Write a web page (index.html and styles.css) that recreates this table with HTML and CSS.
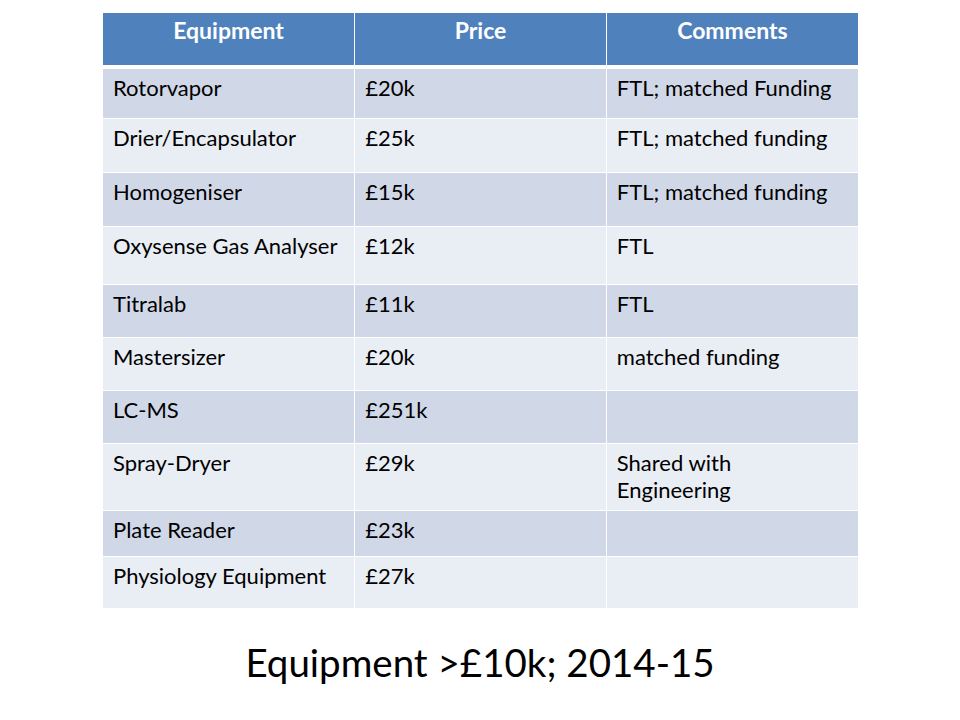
FILE: index.html
```html
<!DOCTYPE html>
<html>
<head>
<meta charset="utf-8">
<link rel="stylesheet" href="styles.css">
</head>
<body>
<div class="slide">
  <table class="equip">
    <thead>
      <tr><th>Equipment</th><th>Price</th><th>Comments</th></tr>
    </thead>
    <tbody>
      <tr><td>Rotorvapor</td><td>£20k</td><td>FTL; matched Funding</td></tr>
      <tr><td>Drier/Encapsulator</td><td>£25k</td><td>FTL; matched funding</td></tr>
      <tr><td>Homogeniser</td><td>£15k</td><td>FTL; matched funding</td></tr>
      <tr><td>Oxysense Gas Analyser</td><td>£12k</td><td>FTL</td></tr>
      <tr><td>Titralab</td><td>£11k</td><td>FTL</td></tr>
      <tr><td>Mastersizer</td><td>£20k</td><td>matched funding</td></tr>
      <tr><td>LC-MS</td><td>£251k</td><td></td></tr>
      <tr><td>Spray-Dryer</td><td>£29k</td><td>Shared with<br>Engineering</td></tr>
      <tr><td>Plate Reader</td><td>£23k</td><td></td></tr>
      <tr><td>Physiology Equipment</td><td>£27k</td><td></td></tr>
    </tbody>
  </table>
  <h1 class="title">Equipment &gt;£10k; 2014-15</h1>
</div>
</body>
</html>
```
FILE: styles.css
```css
html, body {
  margin: 0;
  padding: 0;
  background: #ffffff;
}
.slide {
  width: 960px;
  height: 720px;
  display: flex;
  flex-direction: column;
  align-items: center;
  padding-top: 13px;
  box-sizing: border-box;
  font-family: Lato, "Liberation Sans", sans-serif;
  color: #000000;
}
.equip {
  width: 755px;
  margin-left: 1px;
  border-collapse: collapse;
  table-layout: fixed;
  font-size: 22px;
}
.equip th, .equip td {
  box-sizing: border-box;
  text-align: left;
  vertical-align: top;
  padding: 5px 10px 0 10px;
  line-height: 27px;
  border-left: 1px solid #ffffff;
  border-right: 1px solid #ffffff;
}
.equip th:first-child, .equip td:first-child { border-left: none; }
.equip th:last-child, .equip td:last-child { border-right: none; }
.equip th {
  background: #4f81bd;
  color: #ffffff;
  font-weight: bold;
  font-size: 23px;
  text-align: center;
  height: 54px;
  padding-top: 4px;
  border-bottom: 4px solid #ffffff;
}
.equip tbody tr { border-top: 1px solid #ffffff; }
.equip tbody tr:first-child { border-top: none; }
.equip tbody tr:nth-child(odd) td { background: #d0d8e8; }
.equip tbody tr:nth-child(even) td { background: #e9edf4; }
.equip tbody tr:nth-child(1) td { height: 51px; }
.equip tbody tr:nth-child(2) td { height: 54px; }
.equip tbody tr:nth-child(3) td { height: 54px; }
.equip tbody tr:nth-child(4) td { height: 58px; }
.equip tbody tr:nth-child(5) td { height: 53px; }
.equip tbody tr:nth-child(6) td { height: 53px; }
.equip tbody tr:nth-child(7) td { height: 53px; }
.equip tbody tr:nth-child(8) td { height: 67px; }
.equip tbody tr:nth-child(9) td { height: 46px; }
.equip tbody tr:nth-child(10) td { height: 52px; }
.title {
  margin: 31px 0 0 0;
  font-size: 38.5px;
  font-weight: normal;
  line-height: 46px;
  text-align: center;
}
```
